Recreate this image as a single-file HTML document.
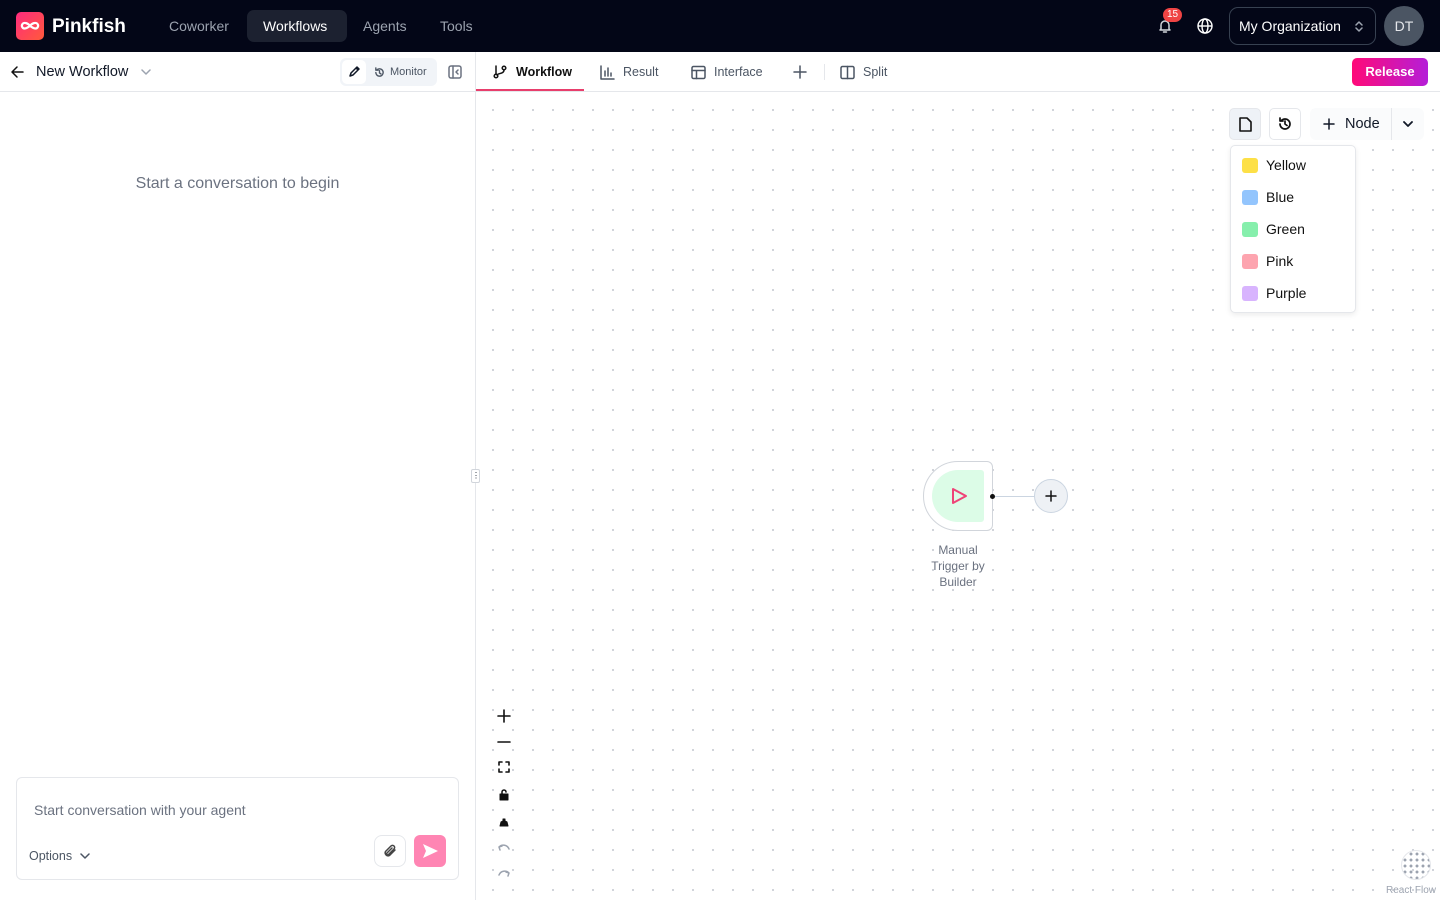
<!DOCTYPE html>
<html><head><meta charset="utf-8"><style>
*{box-sizing:border-box;margin:0;padding:0}
body{width:1440px;height:900px;overflow:hidden;font-family:"Liberation Sans",sans-serif;background:#fff;position:relative;color:#111827}
.top{position:absolute;left:0;top:0;width:1440px;height:52px;background:#030617}
.abs{position:absolute}
.nav{position:absolute;top:10px;height:32px;line-height:32px;font-size:14px;color:#9ca3af;padding:0 16px;border-radius:7px}
.left{position:absolute;left:0;top:52px;width:476px;height:848px;border-right:1px solid #e5e7eb}
.canvas{position:absolute;left:476px;top:92px;width:964px;height:808px;background-image:radial-gradient(circle,#c4c8cf 0.8px,transparent 1.1px);background-size:20px 20px;background-position:7px 8px}
.tab{position:absolute;top:52px;height:40px;font-size:12.5px;color:#4b5563;display:flex;align-items:center;gap:8px}
.dd{position:absolute;left:1230px;top:145px;width:126px;height:168px;background:#fff;border:1px solid #e5e7eb;border-radius:5px;box-shadow:0 2px 6px rgba(0,0,0,.08);padding-top:3px}
.dd div{height:32px;display:flex;align-items:center;padding-left:11px;font-size:14px;gap:8px;color:#111}
.dd span{width:16px;height:15px;border-radius:3px;display:inline-block}
svg.i{fill:none;stroke:currentColor;stroke-width:1.5;stroke-linecap:round;stroke-linejoin:round}
</style></head><body>
<div class="top">
 <div class="abs" style="left:16px;top:12px;width:28px;height:28px;border-radius:5px;background:linear-gradient(135deg,#ff2a7f,#ff5a3a)">
  <svg width="28" height="28" viewBox="0 0 28 28"><path d="M14 14c-2-3-6-4-7.5-2s0 4.5 2 4.5S12 15 14 14zm0 0c2-3 6-4 7.5-2s0 4.5-2 4.5S16 15 14 14z" fill="none" stroke="#fff" stroke-width="2.2"/></svg></div>
 <div class="abs" style="left:52px;top:16px;font-size:19px;font-weight:bold;color:#fff">Pinkfish</div>
 <div class="nav" style="left:153px">Coworker</div>
 <div class="nav" style="left:247px;background:#1c2130;color:#fff;width:100px">Workflows</div>
 <div class="nav" style="left:347px">Agents</div>
 <div class="nav" style="left:424px">Tools</div>
 <svg class="abs i" style="left:1157px;top:18px;color:#d1d5db" width="16" height="16" viewBox="0 0 16 16"><path d="M4 11V7a4 4 0 018 0v4l1 1H3zM6.5 14h3"/></svg>
 <div class="abs" style="left:1163px;top:8px;background:#ef4444;color:#fff;font-size:10px;border-radius:7px;padding:0 4px;height:14px;line-height:14px">15</div>
 <svg class="abs" style="left:1196px;top:17px" width="18" height="18" viewBox="0 0 18 18" fill="none" stroke="#fff" stroke-width="1.4"><circle cx="9" cy="9" r="7"/><ellipse cx="9" cy="9" rx="3" ry="7"/><path d="M2 9h14"/></svg>
 <div class="abs" style="left:1229px;top:7px;width:147px;height:38px;border:1px solid #374151;border-radius:9px;color:#fff;font-size:14px;line-height:36px;padding-left:9px">My Organization
  <svg class="abs i" style="right:12px;top:12px;color:#9ca3af" width="8" height="13" viewBox="0 0 8 13"><path d="M1 5l3-3 3 3M1 8l3 3 3-3"/></svg></div>
 <div class="abs" style="left:1384px;top:6px;width:40px;height:40px;border-radius:50%;background:#4b5563;color:#e5e7eb;font-size:14px;text-align:center;line-height:40px">DT</div>
</div>
<div class="left">
 <svg class="abs i" style="left:10px;top:13px;color:#111" width="15" height="14" viewBox="0 0 15 14"><path d="M13 7H2M7 2L2 7l5 5"/></svg>
 <div class="abs" style="left:36px;top:12px;font-size:14.5px">New Workflow</div>
 <svg class="abs i" style="left:141px;top:17px;color:#9ca3af" width="10" height="6" viewBox="0 0 10 6"><path d="M1 1l4 4 4-4"/></svg>
 <div class="abs" style="left:340px;top:6px;width:97px;height:28px;background:#f1f4f8;border-radius:6px">
  <div class="abs" style="left:2px;top:2px;width:24px;height:24px;background:#fff;border-radius:5px">
   <svg class="i" style="margin:6px" width="12" height="12" viewBox="0 0 12 12"><path d="M2 10l1-3 6-6 2 2-6 6zM8 2l2 2"/></svg></div>
  <svg class="abs i" style="left:34px;top:9px;color:#4b5563" width="11" height="11" viewBox="0 0 12 12"><path d="M2 6a4 4 0 104-4 4 4 0 00-3 1.3M2 1v2.5h2.5M6 4v2.5l1.5 1"/></svg>
  <div class="abs" style="left:50px;top:8px;font-size:11px;color:#4b5563">Monitor</div></div>
 <svg class="abs i" style="left:448px;top:13px;color:#6b7280" width="14" height="14" viewBox="0 0 14 14"><rect x="1" y="1" width="12" height="12" rx="2"/><path d="M5 1v12M10 5L8 7l2 2"/></svg>
 <div class="abs" style="left:0;top:39px;width:475px;height:1px;background:#e5e7eb"></div>
 <div class="abs" style="left:0;top:123px;width:475px;text-align:center;font-size:16px;color:#6b7280">Start a conversation to begin</div>
 <div class="abs" style="left:16px;top:725px;width:443px;height:103px;border:1px solid #e5e7eb;border-radius:6px">
  <div class="abs" style="left:17px;top:24px;font-size:14px;color:#6b7280">Start conversation with your agent</div>
  <div class="abs" style="left:12px;top:71px;font-size:12.5px;color:#4b5563">Options</div>
  <svg class="abs i" style="left:63px;top:75px;color:#4b5563" width="10" height="6" viewBox="0 0 10 6"><path d="M1 1l4 4 4-4"/></svg>
  <div class="abs" style="left:357px;top:57px;width:32px;height:32px;border:1px solid #e5e7eb;border-radius:8px">
   <svg class="i" style="margin:8px;color:#444" width="14" height="14" viewBox="0 0 14 14"><path d="M12 6L6.5 11.5a3 3 0 01-4-4L8 2a2 2 0 013 3L5.5 10.5a1 1 0 01-1.5-1.5L9 4"/></svg></div>
  <div class="abs" style="left:397px;top:57px;width:32px;height:32px;background:#ff85b3;border-radius:6px"><svg width="32" height="32"><path d="M9 9l15 7-15 7 3-7z" fill="#fff"/></svg></div>
 </div>
</div>
<div class="abs" style="left:471px;top:469px;width:9px;height:14px;border:1px solid #d1d5db;background:#fff;border-radius:2px;font-size:8px;text-align:center;line-height:12px">⋮</div>
<div class="tab" style="left:492px;color:#111;font-weight:bold"><svg class="i" width="16" height="16" viewBox="0 0 16 16"><circle cx="4" cy="12" r="1.8"/><circle cx="12" cy="4" r="1.8"/><path d="M4 2v8M12 6c0 4-6 3-7 5"/></svg>Workflow</div>
<div class="abs" style="left:476px;top:89px;width:108px;height:2px;background:#e83e6c"></div>
<div class="tab" style="left:600px"><svg class="i" width="15" height="15" viewBox="0 0 15 15"><path d="M1 1v13h13M5 11V6M8 11V3M11 11V8"/></svg>Result</div>
<div class="tab" style="left:691px"><svg class="i" width="15" height="15" viewBox="0 0 15 15"><rect x="1" y="1.5" width="13" height="12" rx="1.5"/><path d="M1 5.5h13M5.5 5.5v8"/></svg>Interface</div>
<svg class="abs i" style="left:793px;top:65px;color:#4b5563" width="14" height="14" viewBox="0 0 14 14"><path d="M7 1v12M1 7h12"/></svg>
<div class="abs" style="left:824px;top:64px;width:1px;height:16px;background:#e5e7eb"></div>
<div class="tab" style="left:840px"><svg class="i" width="15" height="15" viewBox="0 0 15 15"><rect x="1" y="1.5" width="13" height="12" rx="1.5"/><path d="M7.5 1.5v12"/></svg>Split</div>
<div class="abs" style="left:1352px;top:58px;width:76px;height:28px;border-radius:5px;background:linear-gradient(90deg,#ff0a78,#b51ed8);color:#fff;font-size:13px;font-weight:bold;text-align:center;line-height:28px">Release</div>
<div class="abs" style="left:476px;top:91px;width:964px;height:1px;background:#e5e7eb"></div>
<div class="canvas"></div>
<div class="abs" style="left:1229px;top:108px;width:32px;height:32px;background:#eef2f7;border:1px solid #e5e7eb;border-radius:5px"><svg width="30" height="30"><path d="M10 9h7l4 4v9H10z" fill="none" stroke="#111" stroke-width="1.6" stroke-linejoin="round"/></svg></div>
<div class="abs" style="left:1269px;top:108px;width:32px;height:32px;background:#fff;border:1px solid #e5e7eb;border-radius:5px">
 <svg class="i" style="margin:8px;color:#111" width="14" height="14" viewBox="0 0 14 14"><path d="M2 7a5 5 0 105-5 5 5 0 00-3.6 1.5M2 1v3h3M7 4v3l2 1.5" stroke-width="1.7"/></svg></div>
<div class="abs" style="left:1310px;top:108px;width:114px;height:32px;background:#fafbfc;border-radius:6px;font-size:14.5px;line-height:32px;padding-left:35px">Node
 <svg class="abs i" style="left:13px;top:10px" width="12" height="12" viewBox="0 0 12 12"><path d="M6 1v10M1 6h10"/></svg>
 <span style="position:absolute;left:81px;top:0;width:1px;height:32px;background:#e5e7eb"></span>
 <svg class="abs i" style="left:93px;top:13px" width="10" height="6" viewBox="0 0 10 6"><path d="M1 1l4 4 4-4" stroke-width="1.8"/></svg></div>
<div class="dd">
 <div><span style="background:#fde047"></span>Yellow</div>
 <div><span style="background:#93c5fd"></span>Blue</div>
 <div><span style="background:#86efac"></span>Green</div>
 <div><span style="background:#fda4af"></span>Pink</div>
 <div><span style="background:#d8b4fe"></span>Purple</div>
</div>
<div class="abs" style="left:923px;top:461px;width:70px;height:70px;border:1px solid #d1d5db;border-radius:35px 6px 6px 35px;background:#fff">
 <div class="abs" style="left:8px;top:8px;width:52px;height:52px;border-radius:26px 3px 3px 26px;background:#dcfce7"></div>
 <svg class="abs" style="left:25px;top:24px" width="20" height="20"><path d="M4 3l13 7-13 7z" fill="none" stroke="#ef4478" stroke-width="2" stroke-linejoin="round"/></svg>
</div>
<div class="abs" style="left:990px;top:494px;width:5px;height:5px;border-radius:50%;background:#111"></div>
<div class="abs" style="left:995px;top:496px;width:40px;height:1px;background:#cbd5e1"></div>
<div class="abs" style="left:1034px;top:479px;width:34px;height:34px;border-radius:50%;border:1px solid #cbd5e1;background:#eef1f5"><svg class="i" style="margin:10px;color:#111" width="12" height="12" viewBox="0 0 12 12"><path d="M6 1v10M1 6h10"/></svg></div>
<div class="abs" style="left:918px;top:542px;width:80px;text-align:center;font-size:12px;color:#6b7280;line-height:16px">Manual Trigger by Builder</div>
<svg class="abs i" style="left:496px;top:708px;color:#111" width="16" height="172" viewBox="0 0 16 172">
 <path d="M8 2v12M2 8h12" stroke-width="1.6"/>
 <path d="M2 34h12" stroke-width="1.6"/>
 <path d="M3 57v-3h3M10 54h3v3M13 61v3h-3M6 64H3v-3" stroke-width="1.6"/>
 <rect x="4" y="86" width="8" height="6" fill="#111" stroke-width="1"/><path d="M6 86v-2a2 2 0 014 0" stroke-width="1.5"/>
 <path d="M4 118h8l-1-4-2-1v-2H7v2l-2 1z" fill="#111" stroke-width="1"/>
 <path d="M4 142l-1-3 3-1M3 139a6 6 0 0110 2" stroke="#9ca3af"/>
 <path d="M12 168l1-3-3-1M13 165a6 6 0 00-10 2" stroke="#9ca3af"/>
</svg>
<div class="abs" style="left:1401px;top:850px;width:30px;height:30px;border-radius:50%;border:1px solid #e5e7eb;background:radial-gradient(circle,#9ca3af 1.3px,transparent 1.6px);background-size:6px 6px;background-position:0 0"></div>
<div class="abs" style="left:1386px;top:885px;font-size:10px;color:#9ca3af">React Flow</div>
</body></html>
